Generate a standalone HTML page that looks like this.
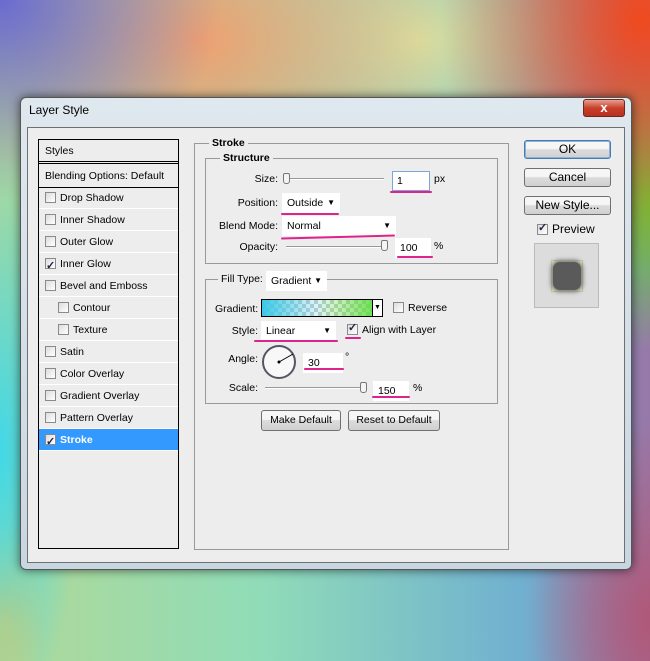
<!DOCTYPE html>
<html><head><style>
*{margin:0;padding:0;box-sizing:border-box;white-space:nowrap}
body{width:650px;height:661px;overflow:hidden;position:relative;font-family:"Liberation Sans",sans-serif;font-size:10.5px;color:#000;
background:
radial-gradient(ellipse 200px 250px at 640px 20px,#f04a1e 0%,rgba(240,80,30,0) 100%),
radial-gradient(ellipse 80px 150px at 650px 200px,#58d838 0%,rgba(88,216,56,0) 100%),
radial-gradient(ellipse 220px 200px at 0px 0px,#6a6ad0 0%,rgba(106,106,208,0) 100%),
radial-gradient(ellipse 250px 200px at 200px 40px,#f0a070 0%,rgba(240,160,112,0) 100%),
radial-gradient(ellipse 200px 160px at 420px 40px,#d8e0a0 0%,rgba(216,224,160,0) 100%),
radial-gradient(ellipse 80px 300px at 0px 450px,#40d8e8 0%,rgba(64,216,232,0) 100%),
radial-gradient(ellipse 40px 100px at 5px 620px,#f8c850 0%,rgba(248,200,80,0) 100%),
radial-gradient(ellipse 120px 200px at 650px 620px,#b05878 0%,rgba(176,88,120,0) 100%),
linear-gradient(90deg,#b0d898 0%,#90dcb8 40%,#70b0d0 80%,#9878a8 100%);}
.abs{position:absolute}
.dlg{left:20px;top:97px;width:612px;height:473px;background:linear-gradient(#dfe8ef,#c8d6e2);border:1px solid #555;border-radius:6px;box-shadow:0 0 10px rgba(0,0,0,.6)}
.inner{left:27px;top:127px;width:598px;height:436px;background:#ededed;border:1px solid #707070}
.title{left:29px;top:103px;font-size:12px;color:#000}
.close{left:583px;top:99px;width:42px;height:18px;border-radius:3px;background:linear-gradient(#e8a090,#c8402a 50%,#b83020);border:1px solid #6a2a20;color:#fff;font-size:13px;font-weight:bold;text-align:center;line-height:15px}
.list{left:38px;top:139px;width:141px;height:410px;border:1px solid #000;background:#ededed}
.row{position:absolute;left:0;width:139px;height:22px;line-height:22px;border-bottom:1px solid #fff;padding-left:6px}
.cb{display:inline-block;width:11px;height:11px;border:1px solid #8a8a8a;background:linear-gradient(135deg,#ddd,#fff);vertical-align:-2px;margin-right:4px;position:relative}
.cb.on::after{content:"✓";position:absolute;left:0;top:-4px;font-size:11px;color:#224;font-weight:bold}
.grp{border:1px solid #999}
.lbl{position:absolute;background:#ededed;padding:0 3px;font-weight:bold}
.field{position:absolute;background:#fff;border:1px solid #fff;padding-left:4px;line-height:18px;height:20px}
.dd::after{content:"▼";position:absolute;right:4px;top:0;font-size:8px}
.mk{position:absolute;height:2px;background:#e0228c;border-radius:1px}
.slider{position:absolute;height:2px;border-top:1px solid #999;border-bottom:1px solid #fff}
.thumb{position:absolute;width:7px;height:11px;border:1px solid #777;border-radius:2px 2px 3px 3px;background:#f4f4f4}
.btn{position:absolute;border:1px solid #707070;border-radius:3px;background:linear-gradient(#f6f6f6 45%,#dcdcdc 50%,#d0d0d0);text-align:center;font-size:12px}
.r{position:absolute;text-align:right}
</style></head><body>
<div class="abs dlg"></div>
<div class="abs title">Layer Style</div>
<div class="abs close">x</div>
<div class="abs inner"></div>

<div class="abs list">
 <div class="row" style="top:0;border-bottom:3px double #000;height:24px;line-height:22px">Styles</div>
 <div class="row" style="top:25px;border-bottom:1px solid #000;height:23px">Blending Options: Default</div>
 <div class="row" style="top:47px"><span class="cb"></span>Drop Shadow</div>
 <div class="row" style="top:69px"><span class="cb"></span>Inner Shadow</div>
 <div class="row" style="top:91px"><span class="cb"></span>Outer Glow</div>
 <div class="row" style="top:113px"><span class="cb on"></span>Inner Glow</div>
 <div class="row" style="top:135px"><span class="cb"></span>Bevel and Emboss</div>
 <div class="row" style="top:157px;padding-left:19px"><span class="cb"></span>Contour</div>
 <div class="row" style="top:179px;padding-left:19px"><span class="cb"></span>Texture</div>
 <div class="row" style="top:201px"><span class="cb"></span>Satin</div>
 <div class="row" style="top:223px"><span class="cb"></span>Color Overlay</div>
 <div class="row" style="top:245px"><span class="cb"></span>Gradient Overlay</div>
 <div class="row" style="top:267px"><span class="cb"></span>Pattern Overlay</div>
 <div class="row" style="top:289px;background:#3399ff;color:#fff;font-weight:bold"><span class="cb on"></span>Stroke</div>
</div>

<div class="abs grp" style="left:194px;top:143px;width:315px;height:407px"></div>
<div class="lbl" style="left:209px;top:137px">Stroke</div>
<div class="abs grp" style="left:205px;top:158px;width:293px;height:106px"></div>
<div class="lbl" style="left:220px;top:152px">Structure</div>

<div class="r" style="left:220px;width:58px;top:173px">Size:</div>
<div class="slider" style="left:284px;top:178px;width:100px"></div>
<div class="thumb" style="left:283px;top:173px"></div>
<div class="field" style="left:392px;top:171px;width:38px;border-color:#7aa7d6">1</div>
<div class="abs" style="left:434px;top:173px">px</div>
<div class="mk" style="left:390px;top:191px;width:42px"></div>

<div class="r" style="left:210px;width:68px;top:197px">Position:</div>
<div class="field dd" style="left:282px;top:193px;width:58px">Outside</div>
<div class="mk" style="left:281px;top:213px;width:58px"></div>

<div class="r" style="left:210px;width:68px;top:220px">Blend Mode:</div>
<div class="field dd" style="left:282px;top:216px;width:114px">Normal</div>
<div class="mk" style="left:281px;top:236px;width:114px;transform:rotate(-1.5deg)"></div>

<div class="r" style="left:210px;width:68px;top:241px">Opacity:</div>
<div class="slider" style="left:286px;top:246px;width:100px"></div>
<div class="thumb" style="left:381px;top:240px"></div>
<div class="field" style="left:395px;top:238px;width:36px">100</div>
<div class="abs" style="left:434px;top:240px">%</div>
<div class="mk" style="left:397px;top:256px;width:36px"></div>

<div class="abs grp" style="left:205px;top:279px;width:293px;height:125px"></div>
<div class="abs" style="left:218px;top:273px;background:#ededed;padding:0 3px;height:14px">Fill Type:</div>
<div class="field dd" style="left:266px;top:271px;width:61px">Gradient</div>

<div class="abs" style="left:215px;top:303px">Gradient:</div>
<div class="abs" style="left:261px;top:299px;width:122px;height:18px;border:1px solid #000;background:
linear-gradient(90deg,rgba(60,200,230,1) 0%,rgba(60,200,230,.2) 45%,rgba(90,220,60,.3) 60%,rgba(90,220,60,1) 100%),repeating-conic-gradient(#ccc 0 25%,#fff 0 50%) 0 0/8px 8px"></div>
<div class="abs" style="left:372px;top:300px;width:10px;height:16px;background:#fff;border-left:1px solid #000;font-size:7px;text-align:center;line-height:16px">▼</div>
<div class="abs" style="left:393px;top:302px"><span class="cb"></span>Reverse</div>

<div class="r" style="left:220px;width:38px;top:325px">Style:</div>
<div class="field dd" style="left:261px;top:321px;width:75px">Linear</div>
<div class="mk" style="left:254px;top:340px;width:84px"></div>
<div class="abs" style="left:347px;top:324px"><span class="cb on"></span>Align with Layer</div>
<div class="mk" style="left:345px;top:337px;width:16px"></div>

<div class="r" style="left:220px;width:38px;top:353px">Angle:</div>
<div class="abs" style="left:262px;top:345px;width:34px;height:34px;border-radius:50%;border:2px solid #556;background:#f8f8f8"></div>
<svg class="abs" style="left:262px;top:345px" width="34" height="34"><line x1="17" y1="17" x2="31" y2="9" stroke="#000" stroke-width="1"/><circle cx="17" cy="17" r="1.5"/></svg>
<div class="field" style="left:303px;top:353px;width:40px">30</div>
<div class="abs" style="left:345px;top:351px">°</div>
<div class="mk" style="left:304px;top:368px;width:40px"></div>

<div class="r" style="left:220px;width:38px;top:382px">Scale:</div>
<div class="slider" style="left:265px;top:387px;width:100px"></div>
<div class="thumb" style="left:360px;top:382px"></div>
<div class="field" style="left:373px;top:381px;width:36px">150</div>
<div class="abs" style="left:413px;top:382px">%</div>
<div class="mk" style="left:372px;top:396px;width:38px"></div>

<div class="btn" style="left:261px;top:410px;width:80px;height:21px;line-height:19px;font-size:10.5px">Make Default</div>
<div class="btn" style="left:348px;top:410px;width:92px;height:21px;line-height:19px;font-size:10.5px">Reset to Default</div>

<div class="btn" style="left:524px;top:140px;width:87px;height:19px;line-height:17px;border-color:#3c7fb1;box-shadow:inset 0 0 0 1px #9ad">OK</div>
<div class="btn" style="left:524px;top:168px;width:87px;height:19px;line-height:17px">Cancel</div>
<div class="btn" style="left:524px;top:196px;width:87px;height:19px;line-height:17px">New Style...</div>
<div class="abs" style="left:537px;top:222px;font-size:12px"><span class="cb on"></span>Preview</div>
<div class="abs" style="left:534px;top:243px;width:65px;height:65px;background:#dcdcdc;border:1px solid #bbb"></div>
<div class="abs" style="left:551px;top:260px;width:32px;height:32px;background:#e8e8c8;border:1px solid #b8d0a0"></div>
<div class="abs" style="left:553px;top:262px;width:28px;height:28px;background:#5a5a5a;border-radius:7px;box-shadow:0 0 4px 2px #777"></div>
</body></html>
